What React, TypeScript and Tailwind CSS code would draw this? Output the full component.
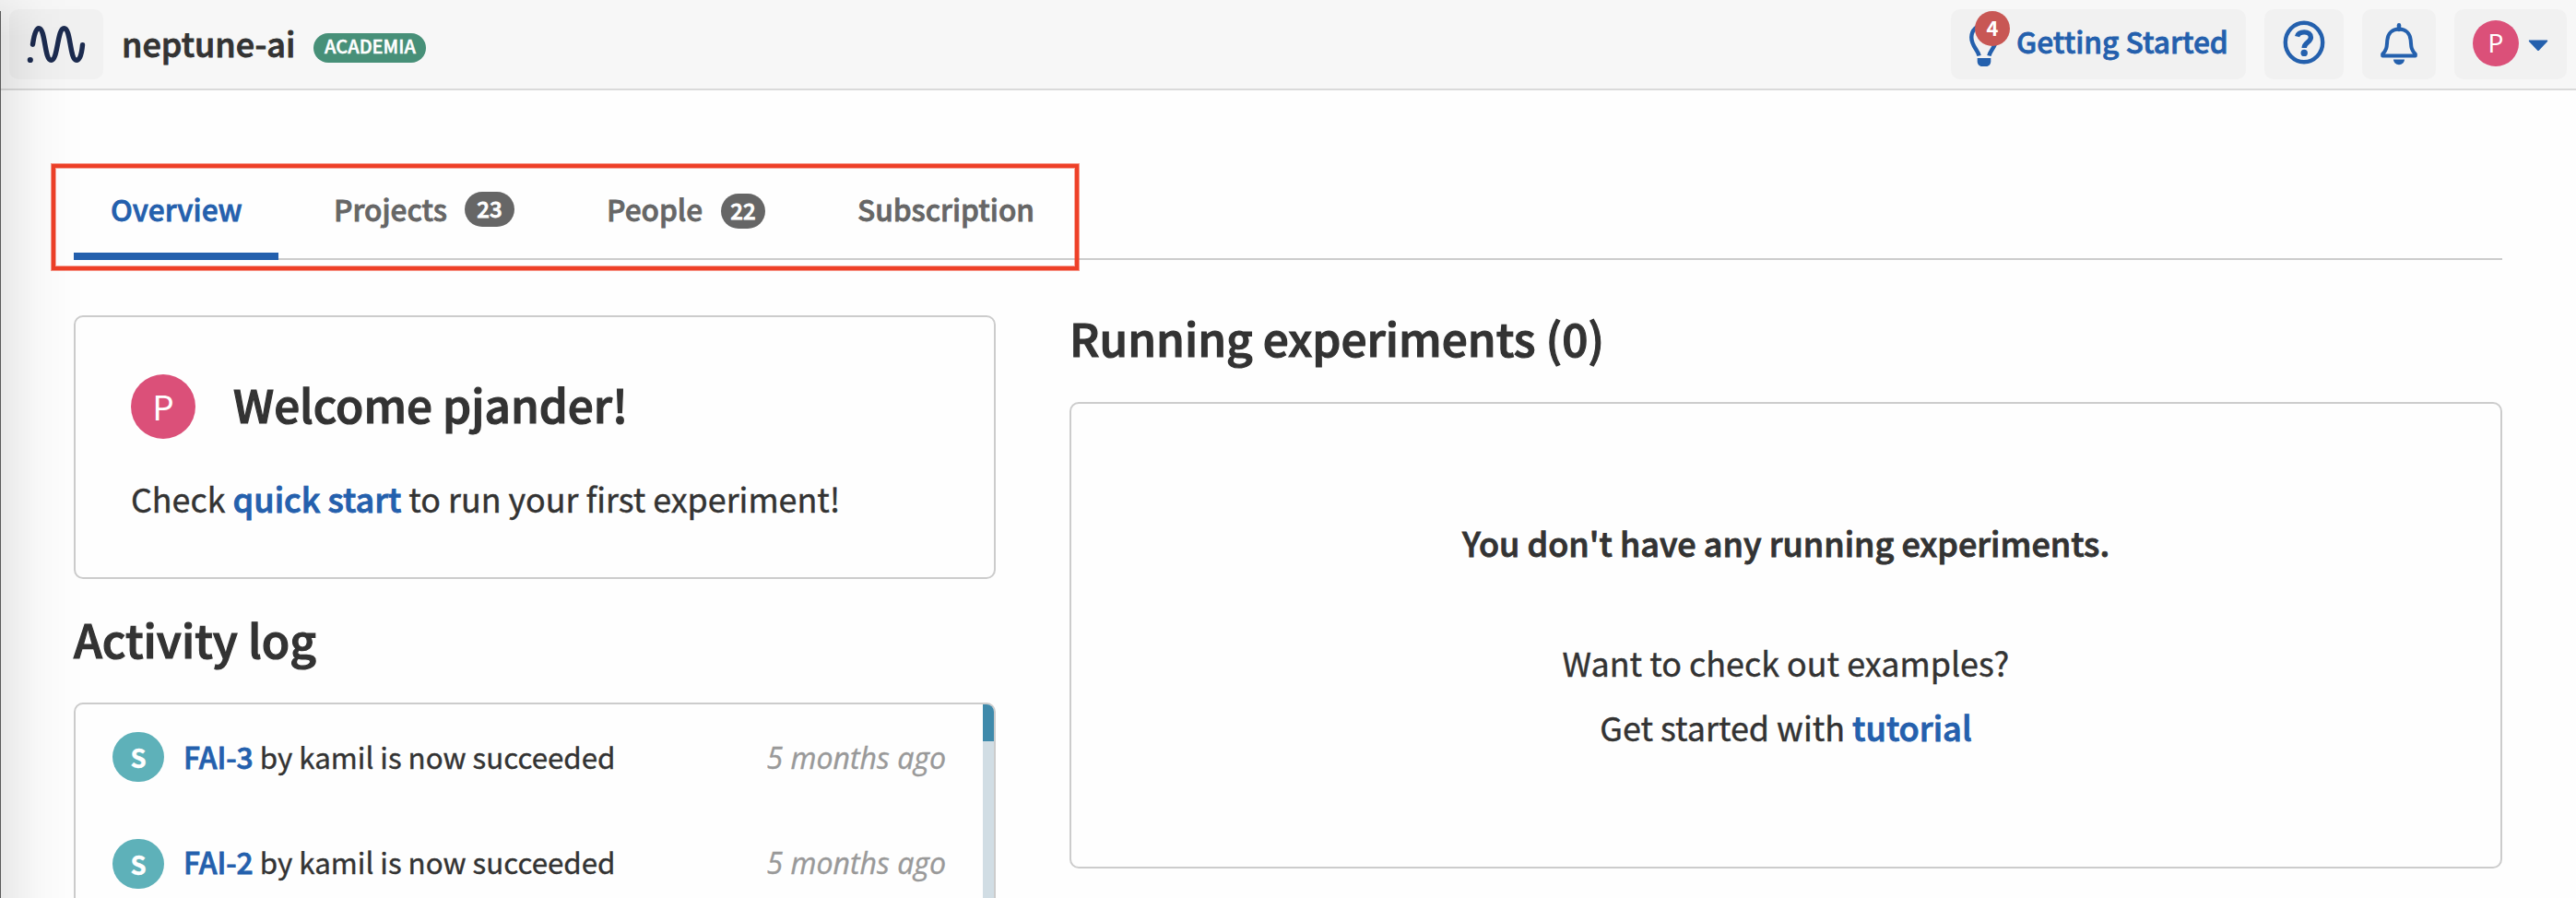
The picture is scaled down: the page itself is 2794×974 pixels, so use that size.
import type { ReactNode } from "react";

function Logo() {
  return (
    <div className="flex h-[76px] w-[102px] items-center justify-center rounded-[10px] bg-[#f1f1f1]">
      <svg width="66" height="44" viewBox="28 26 66 44" fill="none">
        <path
          d="M35.5 48.2C37 37.5 39 30.8 42 30.8C49.5 30.8 48 65.3 55.5 65.3C63 65.3 62 30.8 69.5 30.8C77 30.8 75.5 65.3 83 65.3C86.5 65.3 88.6 59 89.5 48.8"
          stroke="#1c2b4f"
          strokeWidth="5.4"
          strokeLinecap="round"
        />
        <circle cx="32.8" cy="65" r="3.1" fill="#1c2b4f" />
      </svg>
    </div>
  );
}

function BulbIcon() {
  return (
    <svg width="32" height="52" viewBox="0 0 32 52" fill="none">
      <path
        d="M10.6 38.5C9.5 32.5 2.3 28 2.3 18.5C2.3 10.5 8.5 5 16 5C23.5 5 29.7 10.5 29.7 18.5C29.7 28 22.5 32.5 21.4 38.5"
        stroke="#2460ad"
        strokeWidth="4.4"
      />
      <path d="M8.7 41H23.3V44.5C23.3 47.5 21.3 50 18.3 50H13.7C10.7 50 8.7 47.5 8.7 44.5Z" fill="#2460ad" />
    </svg>
  );
}

function HelpIcon() {
  return (
    <svg width="46" height="48" viewBox="0 0 46 48" fill="none">
      <ellipse cx="23" cy="24" rx="20.2" ry="21.2" stroke="#2460ad" strokeWidth="4.4" />
      <path
        d="M15.6 17.6C16.4 14.4 19.6 12.9 23.2 12.9C27.5 12.9 30.4 15.2 30.4 18.6C30.4 24 23.2 23.8 23.2 30"
        stroke="#2460ad"
        strokeWidth="5.4"
      />
      <circle cx="23.2" cy="35.4" r="3.7" fill="#2460ad" />
    </svg>
  );
}

function BellIcon() {
  return (
    <svg width="42" height="46" viewBox="0 0 42 46" fill="none">
      <path d="M21 2.2V7" stroke="#2460ad" strokeWidth="4.4" strokeLinecap="round" />
      <path
        d="M21 6.6C13.5 6.6 9 11.5 8.3 18.5C7.7 25 8.3 28.5 3.2 33.6V35.6H38.8V33.6C33.7 28.5 34.3 25 33.7 18.5C33 11.5 28.5 6.6 21 6.6Z"
        stroke="#2460ad"
        strokeWidth="4"
        strokeLinejoin="round"
      />
      <path d="M15 39.6H27C27 42.5 24.5 45.2 21 45.2C17.5 45.2 15 42.5 15 39.6Z" fill="#2460ad" />
    </svg>
  );
}

const semibold = "font-medium [-webkit-text-stroke:0.025em_currentColor]";
const regular = "[-webkit-text-stroke:0.012em_currentColor]";

function Header() {
  return (
    <header className="flex h-[98px] items-start justify-between border-b-2 border-[#dadada] bg-[#f7f7f7] pt-[10px] pr-[10px] pl-[10px]">
      <div className="flex h-[76px] items-center">
        <Logo />
        <span className={`${semibold} ml-[20px] pb-[4px] text-[36px] leading-[50px] text-[#333333]`}>neptune-ai</span>
        <span
          className={`${semibold} mt-[8px] ml-[20px] flex h-[32px] w-[122px] items-center justify-center rounded-full bg-[#479078] pb-[5px] text-[20px] leading-[24px] text-white`}
        >
          ACADEMIA
        </span>
      </div>
      <div className="flex h-[76px]">
        <button className="relative flex w-[320px] items-center rounded-[10px] bg-[#f1f1f1] pl-[20px]">
          <BulbIcon />
          <span className="absolute top-[2px] left-[26px] flex h-[38px] w-[38px] items-center justify-center rounded-full bg-[#c85754] pb-[5px] text-[22px] leading-[24px] font-bold text-white">
            4
          </span>
          <span className={`${semibold} ml-[19px] pb-[8px] text-[31.7px] leading-[44px] whitespace-nowrap text-[#2460ad]`}>
            Getting Started
          </span>
        </button>
        <button className="ml-[20px] flex w-[86px] items-center justify-center rounded-[10px] bg-[#f1f1f1] pb-[4px]">
          <HelpIcon />
        </button>
        <button className="ml-[20px] flex w-[80px] items-center justify-center rounded-[10px] bg-[#f1f1f1]">
          <BellIcon />
        </button>
        <button className="ml-[20px] flex w-[122px] items-center rounded-[10px] bg-[#f1f1f1] pl-[20px]">
          <span className="mb-[2px] flex h-[50px] w-[50px] items-center justify-center rounded-full bg-[#db5079] pb-[3px] text-[26.5px] leading-[30px] text-white">
            P
          </span>
          <svg className="mt-[3px] ml-[10px]" width="22" height="13" viewBox="0 0 22 13">
            <path d="M1.2 0.6H20.8Q21.6 1 21 2L12 11.6Q11 12.6 10 11.6L1 2Q0.4 1 1.2 0.6Z" fill="#2460ad" />
          </svg>
        </button>
      </div>
    </header>
  );
}

function Tab({ width, active, children }: { width: string; active?: boolean; children: ReactNode }) {
  return (
    <div
      className={`${semibold} ${width} flex h-[106px] items-center border-b-8 pt-[2px] pl-[40px] text-[31.6px] leading-[44px] ${
        active ? "border-[#2460ad] text-[#2460ad]" : "border-transparent text-[#666666]"
      }`}
    >
      {children}
    </div>
  );
}

function Tabs() {
  return (
    <nav className="flex h-[106px] gap-[20px] border-b-2 border-[#cccccc]">
      <Tab width="w-[222px]" active>
        Overview
      </Tab>
      <Tab width="w-[276px]">
        Projects
        <span className="mt-[2px] ml-auto mr-[40px] flex h-[38px] w-[54px] items-center justify-center rounded-full bg-[#666666] pb-[3px] text-[24px] leading-[28px] text-white">
          23
        </span>
      </Tab>
      <Tab width="w-[252px]">
        People
        <span className="mt-[6px] ml-auto mr-[40px] flex h-[38px] w-[48px] items-center justify-center rounded-full bg-[#666666] pb-[3px] text-[24px] leading-[28px] text-white">
          22
        </span>
      </Tab>
      <Tab width="w-[270px]">Subscription</Tab>
    </nav>
  );
}

function LogRow({ id, shift }: { id: string; shift: string }) {
  return (
    <div className={`${regular} flex h-[114px] items-center pr-[40px] pl-[40px] text-[31.3px] leading-[44px]`}>
      <span
        className={`${shift} flex h-[54px] w-[56px] items-center justify-center rounded-[27px] bg-[#5eb1b9] text-[27.5px] leading-[32px] font-bold text-white`}
      >
        S
      </span>
      <span className="ml-[21px] pb-[2px] text-[#333333]">
        <span className={`${semibold} text-[31.8px] text-[#2460ad]`}>{id}</span> by kamil is now succeeded
      </span>
      <span className="ml-auto pt-px font-['Open_Sans'] text-[32.1px] text-[#999999] italic">5 months ago</span>
    </div>
  );
}

export default function App() {
  return (
    <div className="relative h-[974px] w-[2794px] overflow-hidden bg-[#fefefe] font-['Noto_Sans_CJK_SC','Noto_Sans',sans-serif] text-[#333333]">
      <Header />
      <main className="pt-[78px] pr-[80px] pl-[80px]">
        <Tabs />
        <div className="mt-[60px] flex gap-[80px]">
          <div className="w-[1000px]">
            <section className="h-[286px] rounded-[10px] border-2 border-[#cccccc] px-[60px] pt-[62px]">
              <div className="flex h-[70px] items-center">
                <span className="flex h-[70px] w-[70px] items-center justify-center rounded-full bg-[#db5079] pb-[2px] text-[37px] leading-[44px] text-white">
                  P
                </span>
                <h1 className={`${semibold} ml-[41px] pb-[6px] text-[49.4px] leading-[60px]`}>Welcome pjander!</h1>
              </div>
              <p className={`${regular} mt-[34px] text-[35.85px] leading-[60px] whitespace-nowrap`}>
                Check <span className={`${semibold} text-[36.1px] text-[#2460ad]`}>quick start</span> to run your first experiment!
              </p>
            </section>
            <h2 className={`${semibold} mt-[40px] text-[49.6px] leading-[48px]`}>Activity log</h2>
            <section className="mt-[46px] flex h-[400px] overflow-hidden rounded-[10px] border-2 border-[#cccccc]">
              <div className="flex-1">
                <LogRow id="FAI-3" shift="mt-0" />
                <LogRow id="FAI-2" shift="mt-[4px]" />
              </div>
              <div className="w-[12px] bg-[#d1dde4]">
                <div className="h-[40px] bg-[#3f8aab]" />
              </div>
            </section>
          </div>
          <div className="w-[1554px]">
            <h2 className={`${semibold} text-[49.5px] leading-[48px]`}>Running experiments (0)</h2>
            <section
              className={`${regular} mt-[46px] h-[506px] rounded-[10px] border-2 border-[#cccccc] pt-[115px] text-center text-[35.9px] leading-[70px]`}
            >
              <p className={`${semibold} text-[36px]`}>You don't have any running experiments.</p>
              <p className="mt-[60px]">Want to check out examples?</p>
              <p>
                Get started with <span className={`${semibold} text-[36.2px] text-[#2460ad]`}>tutorial</span>
              </p>
            </section>
          </div>
        </div>
      </main>
      <div className="absolute top-[178px] left-[56px] h-[115px] w-[1114px] border-4 border-[#ee4028] shadow-[0_0_0_1px_rgba(238,64,40,0.55),inset_0_0_0_1px_rgba(238,64,40,0.45)]" />
      <div className="pointer-events-none absolute top-0 left-0 h-full w-[100px] bg-[linear-gradient(to_right,rgba(0,0,0,0.085),rgba(0,0,0,0.055)_20px,rgba(0,0,0,0.02)_45px,rgba(0,0,0,0.005)_75px,transparent)] [mask-image:linear-gradient(to_bottom,rgba(0,0,0,0.4),black_40px)]" />
      <div className="absolute top-[12px] left-0 h-[962px] w-px bg-[#5a5a5a]" />
    </div>
  );
}
